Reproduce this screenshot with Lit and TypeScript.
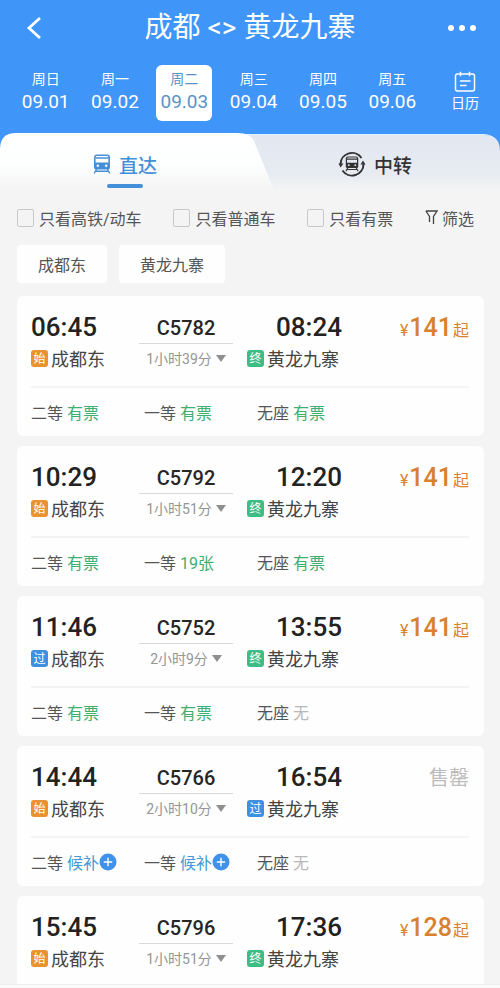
import { LitElement, html, svg, css, nothing } from "lit";
import { customElement, property, state } from "lit/decorators.js";
import { classMap } from "lit/directives/class-map.js";

type StopKind = "start" | "pass" | "end";

interface Seat {
  name: string;
  value: string;
  kind: "free" | "wait" | "none";
}

interface Train {
  code: string;
  depart: string;
  arrive: string;
  from: StopKind;
  to: StopKind;
  duration: string;
  price: string;
  seats: Seat[];
}

const seat = (name: string, value: string, kind: Seat["kind"] = "free"): Seat => ({ name, value, kind });

const TRAINS: Train[] = [
  {
    code: "C5782", depart: "06:45", arrive: "08:24", from: "start", to: "end", duration: "1小时39分", price: "141",
    seats: [seat("二等", "有票"), seat("一等", "有票"), seat("无座", "有票")],
  },
  {
    code: "C5792", depart: "10:29", arrive: "12:20", from: "start", to: "end", duration: "1小时51分", price: "141",
    seats: [seat("二等", "有票"), seat("一等", "19张"), seat("无座", "有票")],
  },
  {
    code: "C5752", depart: "11:46", arrive: "13:55", from: "pass", to: "end", duration: "2小时9分", price: "141",
    seats: [seat("二等", "有票"), seat("一等", "有票"), seat("无座", "无", "none")],
  },
  {
    code: "C5766", depart: "14:44", arrive: "16:54", from: "start", to: "pass", duration: "2小时10分", price: "",
    seats: [seat("二等", "候补", "wait"), seat("一等", "候补", "wait"), seat("无座", "无", "none")],
  },
  {
    code: "C5796", depart: "15:45", arrive: "17:36", from: "start", to: "end", duration: "1小时51分", price: "128",
    seats: [],
  },
];

const DAYS = [
  ["周日", "09.01"],
  ["周一", "09.02"],
  ["周二", "09.03"],
  ["周三", "09.04"],
  ["周四", "09.05"],
  ["周五", "09.06"],
];

const STOP_LABEL: Record<StopKind, string> = { start: "始", pass: "过", end: "终" };

const trainShape = svg`
  <path fill-rule="evenodd" d="M4 .5h10a3 3 0 0 1 3 3v10a2 2 0 0 1-2 2H3a2 2 0 0 1-2-2v-10a3 3 0 0 1 3-3z
    M4 2a1.400 1.400 0 0 0-1.400 1.400V8.500h12.800V3.400A1.400 1.400 0 0 0 14 2z
    M4.800 10.500a1.200 1.200 0 1 0 0 2.400a1.200 1.200 0 1 0 0-2.400z
    M13.200 10.500a1.200 1.200 0 1 0 0 2.400a1.200 1.200 0 1 0 0-2.400z" fill="currentColor"/>
  <path d="M2.500 4h13M3.600 15L1.200 19.500M14.400 15l2.400 4.500M2.800 17.300h12.400" fill="none" stroke="currentColor" stroke-width="1.400"/>`;

@customElement("train-card")
export class TrainCard extends LitElement {
  @property({ attribute: false }) train!: Train;

  static styles = css`
    :host {
      display: block;
      flex: none;
      box-sizing: border-box;
      min-height: 140px;
      padding: 16px 15px 0 14px;
      border-radius: 6px;
      background: #fefefe;
      color: #333;
    }
    .trip {
      display: grid;
      grid-template-columns: 108px 94px 14px 110px 1fr;
      height: 74px;
    }
    .time {
      font-size: 26px;
      line-height: 30px;
      font-weight: 500;
      color: #222;
    }
    .arrival .time {
      padding-left: 29px;
    }
    .arrival {
      grid-column: 4;
    }
    .station {
      display: flex;
      align-items: center;
      gap: 3px;
      height: 32px;
      font-size: 18px;
      white-space: nowrap;
      color: #444;
    }
    .stop {
      width: 17px;
      height: 17px;
      border-radius: 3px;
      font-size: 12px;
      line-height: 19px;
      text-align: center;
      color: #fff;
    }
    .start { background: #ea9130; }
    .end { background: #3ebc85; }
    .pass { background: #4090e2; }
    .middle {
      text-align: center;
    }
    .code {
      height: 31px;
      border-bottom: 1px solid #d9d9d9;
      font-size: 20px;
      line-height: 32px;
      font-weight: 500;
      color: #262626;
    }
    .duration {
      display: flex;
      justify-content: center;
      align-items: center;
      gap: 4px;
      width: 100%;
      height: 28px;
      padding: 0;
      border: 0;
      background: none;
      font: inherit;
      font-size: 14px;
      white-space: nowrap;
      color: #959595;
    }
    .price {
      display: flex;
      justify-content: flex-end;
      align-items: baseline;
      gap: 1px;
      line-height: 32px;
      font-size: 16px;
      color: #d8812f;
    }
    .amount {
      font-size: 25px;
      font-weight: 500;
    }
    .sold {
      font-size: 20px;
      color: #bdbdbd;
    }
    .seats {
      display: grid;
      grid-template-columns: 113px 113px 1fr;
      border-top: 2px solid #f3f3f3;
      height: 48px;
      align-items: center;
      font-size: 16px;
      color: #555;
    }
    .seat {
      display: flex;
      align-items: center;
      gap: 4px;
      white-space: nowrap;
    }
    .value {
      display: flex;
      align-items: center;
      padding: 0;
      border: 0;
      background: none;
      font: inherit;
    }
    .free { color: #3eae71; }
    .wait { color: #4598d4; }
    .none { color: #b8b8b8; }
  `;

  private stop(kind: StopKind, name: string) {
    return html`<div class="station">
      <span class=${classMap({ stop: true, [kind]: true })}>${STOP_LABEL[kind]}</span><span>${name}</span>
    </div>`;
  }

  private seatValue(s: Seat) {
    return s.kind === "wait"
      ? html`<button class="value wait">${s.value}<svg width="18" height="18" viewBox="0 0 18 18" aria-hidden="true">
          <circle cx="9" cy="9" r="8.500" fill="#3f91e9"/>
          <path d="M9 4.800v8.400M4.800 9h8.400" stroke="#fff" stroke-width="1.400"/>
        </svg></button>`
      : html`<span class=${classMap({ value: true, [s.kind]: true })}>${s.value}</span>`;
  }

  render() {
    const t = this.train;
    return html`
      <div class="trip">
        <div>
          <div class="time">${t.depart}</div>
          ${this.stop(t.from, "成都东")}
        </div>
        <div class="middle">
          <div class="code">${t.code}</div>
          <button class="duration">
            <span>${t.duration}</span>
            <svg width="10" height="7" viewBox="0 0 10 7" aria-hidden="true"><path d="M0 0h10L5 7z" fill="#8f8f8f"/></svg>
          </button>
        </div>
        <div class="arrival">
          <div class="time">${t.arrive}</div>
          ${this.stop(t.to, "黄龙九寨")}
        </div>
        ${t.price
          ? html`<div class="price"><span>¥</span><span class="amount">${t.price}</span><span>起</span></div>`
          : html`<div class="price sold">售罄</div>`}
      </div>
      ${t.seats.length
        ? html`<div class="seats">
            ${t.seats.map((s) => html`<div class="seat"><span>${s.name}</span>${this.seatValue(s)}</div>`)}
          </div>`
        : nothing}
    `;
  }
}

@customElement("app-root")
export class AppRoot extends LitElement {
  @state() private day = 2;

  static styles = css`
    :host {
      display: flex;
      flex-direction: column;
      height: 100vh;
      overflow: hidden;
      background: #f4f4f4;
      font-family: Roboto, "Noto Sans CJK SC", sans-serif;
      color: #555;
    }
    button {
      margin: 0;
      padding: 0;
      border: 0;
      background: none;
      font: inherit;
      color: inherit;
      cursor: pointer;
    }
    svg { display: block; flex: none; }
    .top {
      flex: none;
      background: #3f95f8;
      color: #fff;
    }
    .bar {
      display: grid;
      grid-template-columns: 60px 1fr 60px;
      align-items: center;
      height: 56px;
      padding: 0 8px;
    }
    .back { padding-left: 18px; }
    .more { justify-self: end; padding-right: 15px; }
    h1 {
      margin: 0;
      font-size: 28px;
      line-height: 44px;
      font-weight: 400;
      text-align: center;
      white-space: nowrap;
    }
    .dates {
      display: grid;
      grid-template-columns: repeat(6, 1fr) 68px;
      padding: 9px 0 12px 11px;
    }
    .dates {
      padding-right: 5px;
    }
    .day {
      display: flex;
      justify-content: center;
    }
    .pill {
      display: block;
      width: 56px;
      height: 56px;
      border-radius: 6px;
      text-align: center;
    }
    .week, .date { display: block; }
    .week {
      padding-top: 4px;
      font-size: 14px;
      line-height: 20px;
    }
    .date {
      font-size: 19px;
      line-height: 26px;
    }
    .on {
      background: #fff;
      color: #5b93c6;
    }
    .calendar {
      display: flex;
      flex-direction: column;
      align-items: center;
      padding-top: 6px;
      padding-left: 8px;
      font-size: 14px;
      line-height: 20px;
    }
    .tabs {
      display: flex;
      position: relative;
      height: 62px;
    }
    .sheet {
      position: absolute;
      inset: 0;
      width: 100%;
      height: 100%;
    }
    .tab {
      position: relative;
      flex: 1;
      display: flex;
      justify-content: center;
      align-items: center;
      gap: 8px;
      font-size: 19px;
      font-weight: 500;
      color: #333;
    }
    .current { color: #438fd8; }
    .current::after {
      content: "";
      position: absolute;
      left: 50%;
      bottom: 7px;
      width: 36px;
      height: 4px;
      margin-left: -18px;
      border-radius: 2px;
      background: #438fd8;
    }
    .filters {
      flex: none;
      display: flex;
      align-items: center;
      justify-content: space-between;
      height: 45px;
      padding: 0 26px 0 17px;
      font-size: 16px;
      white-space: nowrap;
    }
    .check {
      display: flex;
      align-items: center;
      gap: 5px;
    }
    .check input {
      appearance: none;
      box-sizing: border-box;
      width: 17px;
      height: 18px;
      margin: 0;
      border: 1px solid #c8c8c8;
      border-radius: 2px;
    }
    .filter {
      display: flex;
      align-items: center;
      gap: 4px;
    }
    .stations {
      flex: none;
      display: flex;
      gap: 12px;
      padding: 5px 17px 13px;
      font-size: 16px;
    }
    .stations button {
      height: 38px;
      padding: 0 21px;
      border-radius: 4px;
      background: #fefefe;
    }
    .list {
      flex: 1;
      min-height: 0;
      display: flex;
      flex-direction: column;
      gap: 10px;
      padding: 0 16px 0 17px;
      overflow-y: auto;
      scrollbar-width: none;
    }
    .foot {
      flex: none;
      height: 3px;
      border-top: 1px solid #eee;
      background: #fafafa;
    }
  `;

  render() {
    return html`
      <header class="top">
        <div class="bar">
          <button class="back" aria-label="返回">
            <svg width="16" height="24" viewBox="0 0 16 24"><path d="M14 2L3 12l11 10" fill="none" stroke="#fff" stroke-width="2.800"/></svg>
          </button>
          <h1>成都 &lt;&gt; 黄龙九寨</h1>
          <button class="more" aria-label="更多">
            <svg width="30" height="8" viewBox="0 0 30 8" fill="#fff"><circle cx="4" cy="4" r="3"/><circle cx="15" cy="4" r="3"/><circle cx="26" cy="4" r="3"/></svg>
          </button>
        </div>
        <nav class="dates">
          ${DAYS.map(
            ([week, date], i) => html`<button class="day" @click=${() => (this.day = i)}>
              <span class=${classMap({ pill: true, on: this.day === i })}>
                <span class="week">${week}</span><span class="date">${date}</span>
              </span>
            </button>`
          )}
          <button class="calendar">
            <svg width="22" height="22" viewBox="0 0 22 22" fill="none" stroke="#fff" stroke-width="1.500">
              <rect x="1.500" y="3" width="19" height="17" rx="2"/>
              <path d="M6.500 .8v4.400M15.500 .8v4.400M6 10h10.500M6 14.500h6.500"/>
            </svg>
            日历
          </button>
        </nav>
        <div class="tabs">
          <svg class="sheet" viewBox="0 0 500 62" preserveAspectRatio="none" aria-hidden="true">
            <defs>
              <linearGradient id="back" x1="0" y1="0" x2="0" y2="1">
                <stop offset="0" stop-color="#e2e7f0"/><stop offset=".65" stop-color="#e7ebf2"/><stop offset=".95" stop-color="#f4f4f4"/>
              </linearGradient>
              <linearGradient id="front" x1="0" y1="0" x2="0" y2="1">
                <stop offset="0" stop-color="#fff"/><stop offset=".5" stop-color="#fdfefe"/><stop offset=".95" stop-color="#f4f4f4"/>
              </linearGradient>
            </defs>
            <path d="M200 2H484Q500 2 500 18V62H200z" fill="url(#back)"/>
            <path d="M230 1.500H484Q494 2 498 10" fill="none" stroke="#dff1ff"/>
            <path d="M0 62V16Q0 0 16 0H238Q250 0 254 8L276 62z" fill="url(#front)"/>
          </svg>
          <button class="tab current">
            <svg width="18" height="20" viewBox="0 0 18 20" aria-hidden="true">${trainShape}</svg>直达
          </button>
          <button class="tab">
            <svg width="28" height="28" viewBox="0 0 28 28" aria-hidden="true">
              <path d="M23.500 8A11.500 11.500 0 0 0 2.500 14M4.500 20.500A11.500 11.500 0 0 0 25.500 14" fill="none" stroke="currentColor" stroke-width="2"/>
              <path d="M.5 13.500h5l-3 4zM22.500 14.500h5l-2.500-4z" fill="currentColor"/>
              <g transform="translate(7 6) scale(.78)">${trainShape}</g>
            </svg>中转
          </button>
        </div>
      </header>
      <div class="filters">
        <label class="check"><input type="checkbox" />只看高铁/动车</label>
        <label class="check"><input type="checkbox" />只看普通车</label>
        <label class="check"><input type="checkbox" />只看有票</label>
        <button class="filter">
          <svg width="13" height="15" viewBox="0 0 13 15" fill="none" stroke="#444" stroke-width="1.300"><path d="M.9 1h11.200L8.500 6.500V14M.9 1l3.600 5.500V12"/></svg>筛选
        </button>
      </div>
      <div class="stations"><button>成都东</button><button>黄龙九寨</button></div>
      <main class="list">${TRAINS.map((t) => html`<train-card .train=${t}></train-card>`)}</main>
      <div class="foot"></div>
    `;
  }
}
